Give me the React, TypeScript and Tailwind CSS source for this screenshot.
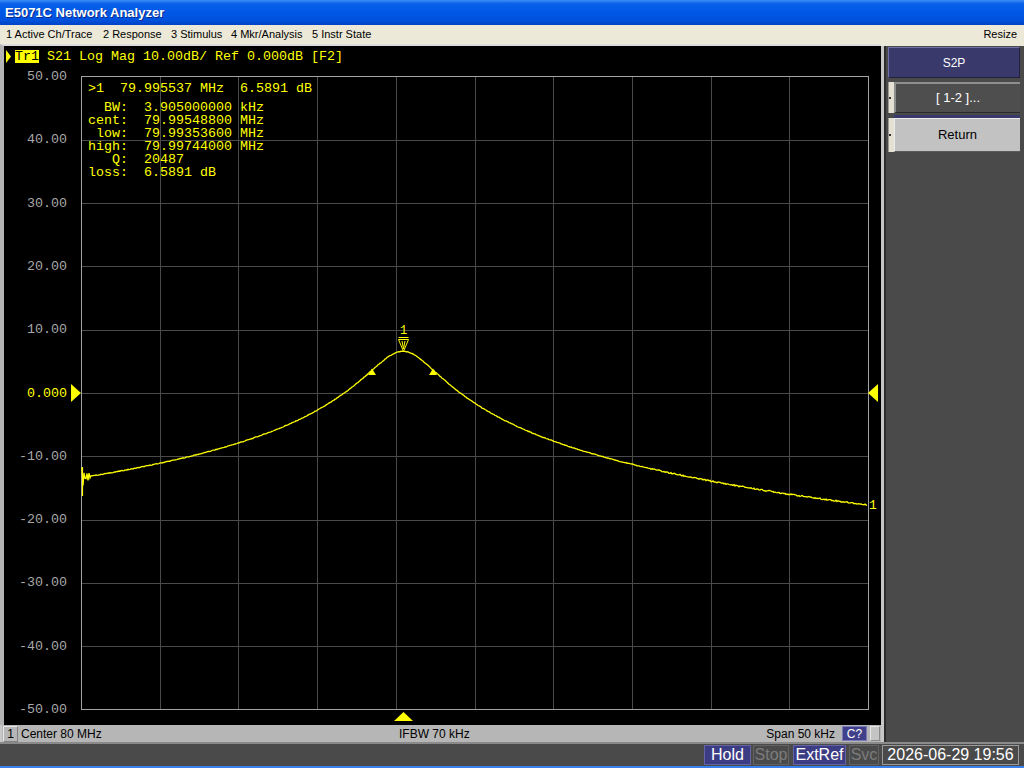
import React from 'react';

const YELLOW = '#ffff00';
const MONO = "'Liberation Mono', 'DejaVu Sans Mono', monospace";

// graticule geometry (page coordinates)
const GX0 = 81;
const GX1 = 868;
const GY0 = 76.5;
const GY1 = 709.5;
const DIV_X = (GX1 - GX0) / 10;
const DIV_Y = (GY1 - GY0) / 10;
const REF_Y = GY0 + DIV_Y * 5;

const yOfDb = (db: number) => REF_Y - db * (DIV_Y / 10);

// resonance: peak 79.995537 MHz, BW 3.905 kHz, span 50 kHz around 80 MHz
const PEAK_X = 403;

const buildTrace = () => {
  const pts: string[] = [];
  for (let x = GX0 + 1; x <= GX1 - 1; x += 1) {
    const dk = ((x - PEAK_X) / (GX1 - GX0)) * 50;
    const r = (2 * dk) / 3.905;
    let db = 6.5891 - 10 * Math.log10(1 + r * r) - 0.00145 * (x - PEAK_X);
    if (x < 92) db += Math.sin(x * 2.7) * (92 - x) * 0.16;
    const jit = Math.sin(x * 12.9898) * 43758.5453;
    db += (jit - Math.floor(jit) - 0.5) * (x > 650 ? 0.22 : 0.1);
    pts.push(`${x},${yOfDb(db).toFixed(1)}`);
  }
  return 'M' + pts.join(' L');
};

const TRACE = buildTrace();

const Graticule: React.FC = () => {
  const labels = Array.from({ length: 11 }, (_, i) => 50 - i * 10);
  return (
    <svg className="absolute inset-0" width="877" height="679">
      <g transform="translate(-4,-46)">
        {Array.from({ length: 9 }, (_, i) => {
          const x = Math.round(GX0 + DIV_X * (i + 1)) + 0.5;
          return <line key={'v' + i} x1={x} y1={GY0} x2={x} y2={GY1} stroke="#4a4a4a" />;
        })}
        {Array.from({ length: 9 }, (_, i) => {
          const y = Math.round(GY0 + DIV_Y * (i + 1)) + 0.5;
          return <line key={'h' + i} x1={GX0} y1={y} x2={GX1} y2={y} stroke="#4a4a4a" />;
        })}
        <rect x={GX0 + 0.5} y={GY0} width={GX1 - GX0} height={GY1 - GY0} fill="none" stroke="#a4a4a4" />

        {labels.map((v, i) => (
          <text
            key={v}
            x={67}
            y={GY0 + DIV_Y * i}
            textAnchor="end"
            dominantBaseline="central"
            fontFamily={MONO}
            fontSize="13.33"
            fill={v === 0 ? YELLOW : '#a8a8a8'}
          >
            {v === 0 ? '0.000' : v.toFixed(2)}
          </text>
        ))}

        {/* reference level arrows */}
        <polygon points={`71,${REF_Y - 9} 81,${REF_Y} 71,${REF_Y + 9}`} fill={YELLOW} />
        <polygon points={`878,${REF_Y - 9} 868,${REF_Y} 878,${REF_Y + 9}`} fill={YELLOW} />
        {/* stimulus position */}
        <polygon points="394,721 403.5,712 413,721" fill={YELLOW} />

        {/* trace */}
        <path d={TRACE} fill="none" stroke={YELLOW} strokeWidth="1.3" />
        <line x1="82.5" y1="467" x2="82.5" y2="496" stroke={YELLOW} strokeWidth="1.2" />
        <text x="869" y="505" dominantBaseline="central" fontFamily={MONO} fontSize="13" fill={YELLOW}>
          1
        </text>

        {/* marker 1 */}
        <text x="403.5" y="331" textAnchor="middle" dominantBaseline="central" fontFamily={MONO} fontSize="12" fill={YELLOW}>
          1
        </text>
        <line x1="398.5" y1="337.5" x2="408.5" y2="337.5" stroke={YELLOW} />
        <polygon points="398.5,339.5 408.5,339.5 403.5,351.5" fill="#000" stroke={YELLOW} />
        <line x1="402" y1="341" x2="403.5" y2="349" stroke={YELLOW} />
        <line x1="405" y1="341" x2="403.5" y2="349" stroke={YELLOW} />

        {/* bandwidth markers */}
        <polygon points="368,375 376,375 372,368.5" fill={YELLOW} />
        <polygon points="429,375 437,375 433,368.5" fill={YELLOW} />
      </g>
    </svg>
  );
};

const readout = [
  '  BW:  3.905000000 kHz',
  'cent:  79.99548800 MHz',
  ' low:  79.99353600 MHz',
  'high:  79.99744000 MHz',
  '   Q:  20487',
  'loss:  6.5891 dB',
];

const menus = [
  { label: '1 Active Ch/Trace', w: 'w-[97px]' },
  { label: '2 Response', w: 'w-[68px]' },
  { label: '3 Stimulus', w: 'w-[60px]' },
  { label: '4 Mkr/Analysis', w: 'w-[81px]' },
  { label: '5 Instr State', w: 'w-[80px]' },
];

const SideTab: React.FC = () => (
  <div className="w-[6px] self-stretch bg-[#e4e1d4] border-l border-[#9c9a90] flex items-center">
    <div className="w-[2px] h-[2px] bg-[#303030]" />
  </div>
);

export default function App() {
  return (
    <div
      className="w-[1024px] h-[768px] flex flex-col overflow-hidden bg-[#ece9d8]"
      style={{ fontFamily: "'Liberation Sans', Arial, sans-serif" }}
    >
      {/* window title */}
      <div className="h-[25px] flex items-center pl-[5px] bg-[linear-gradient(180deg,#3d8ff8_0%,#0b61ea_14%,#0058e6_45%,#0052de_80%,#0042c4_100%)]">
        <span className="text-white font-bold text-[13px] [text-shadow:1px_1px_0_#0b2a8a]">E5071C Network Analyzer</span>
      </div>

      {/* menu bar */}
      <div className="h-[19px] flex items-center pl-[6px] pr-[7px] text-[11px] text-black">
        {menus.map((m) => (
          <span key={m.label} className={`${m.w} whitespace-nowrap`}>
            {m.label}
          </span>
        ))}
        <span className="ml-auto">Resize</span>
      </div>

      {/* main area */}
      <div className="h-[698px] flex">
        {/* channel window */}
        <div className="w-[881px] flex flex-col">
          <div className="relative flex-1 bg-black border-l-[4px] border-t-2 border-l-[#b4b4b4] border-t-[#dcdcdc]">
            <Graticule />
            <div className="relative flex items-center pt-[4px] pl-[2px]" style={{ fontFamily: MONO }}>
              <svg width="5" height="13" className="mr-[4px]">
                <polygon points="0,0 5,6.5 0,13" fill={YELLOW} />
              </svg>
              <span className="h-[13px] leading-[13px] text-[13.33px] bg-[#ffff00] text-black">Tr1</span>
              <span className="h-[13px] leading-[13px] text-[13.33px] text-[#ffff00] whitespace-pre">
                {' S21 Log Mag 10.00dB/ Ref 0.000dB [F2]'}
              </span>
            </div>
            <div
              className="absolute left-[84px] top-[36px] text-[13.33px] leading-[13px] text-[#ffff00] whitespace-pre"
              style={{ fontFamily: MONO }}
            >
              <div>{'>1  79.995537 MHz  6.5891 dB'}</div>
              <div className="mt-[6px]">
                {readout.map((l) => (
                  <div key={l}>{l}</div>
                ))}
              </div>
            </div>
          </div>

          {/* channel status line */}
          <div className="h-[17px] flex items-center bg-[#b6b6b6] text-[12px] text-black border-l-2 border-[#c8c8c8]">
            <div className="w-[15px] h-[16px] ml-[1px] flex items-center justify-center border border-[#e8e8e8] border-r-[#808080] border-b-[#808080]">
              1
            </div>
            <span className="w-[381px] pl-[3px] whitespace-nowrap">Center 80 MHz</span>
            <span className="whitespace-nowrap">IFBW 70 kHz</span>
            <span className="ml-auto whitespace-nowrap">Span 50 kHz</span>
            <div className="ml-[7px] w-[25px] h-[15px] flex items-center justify-center bg-[#40408a] text-white border border-[#7a7ab8]">
              C?
            </div>
            <div className="ml-[3px] mr-[1px] w-[10px] h-[15px] bg-[#c4c4c4] border border-[#e6e6e6] border-r-[#8a8a8a] border-b-[#8a8a8a]" />
          </div>
        </div>

        {/* softkey panel */}
        <div className="flex-1 mt-[2px] flex flex-col bg-[#4a4a4a] border-l-[3px] border-[#c6c6c6]">
          <div className="flex-1 flex flex-col pt-[1px] pl-[2px] pr-[4px] border-l-2 border-[#2c2c2c] text-[13px]">
            <div className="h-[31px] flex items-center justify-center bg-[#39396c] text-white text-[12px] border-t border-l border-[#6e6ea8] border-b border-r border-b-[#22223e] border-r-[#22223e]">
              S2P
            </div>
            <div className="h-[4px]" />
            <div className="h-[31px] flex">
              <SideTab />
              <div className="flex-1 flex items-center justify-center bg-[#4e4e4e] text-white border-t-2 border-l-2 border-[#8e8e8e] border-b border-b-[#2a2a2a]">
                [ 1-2 ]...
              </div>
            </div>
            <div className="h-[2px]" />
            <div className="h-[3px] ml-[6px] bg-[#39396c]" />
            <div className="h-[34px] flex">
              <SideTab />
              <div className="flex-1 flex items-center justify-center bg-[#c2c2c2] text-black border-t border-l border-[#ececec] border-b border-b-[#5a5a5a]">
                Return
              </div>
            </div>
          </div>
        </div>
      </div>

      {/* instrument status bar */}
      <div className="h-[24px] flex items-center justify-end pr-[5px] bg-[#4a4a4a] border-t-2 border-[#8a8a8a] text-[16px]">
        <div className="w-[47px] h-[20px] flex items-center justify-center bg-[#3c3c84] text-white border border-[#6464a4]">Hold</div>
        <div className="ml-[2px] w-[36px] h-[20px] flex items-center justify-center text-[#7c7c7c] border border-[#626262]">Stop</div>
        <div className="ml-[4px] w-[53px] h-[20px] flex items-center justify-center bg-[#3c3c84] text-white border border-[#6464a4]">ExtRef</div>
        <div className="ml-[3px] w-[30px] h-[20px] flex items-center justify-center text-[#7c7c7c] border border-[#626262]">Svc</div>
        <div className="ml-[3px] w-[137px] h-[20px] flex items-center justify-center text-white border border-[#9a9a9a]">2026-06-29 19:56</div>
      </div>
      <div className="h-[2px] bg-[#3a80ee]" />
    </div>
  );
}
